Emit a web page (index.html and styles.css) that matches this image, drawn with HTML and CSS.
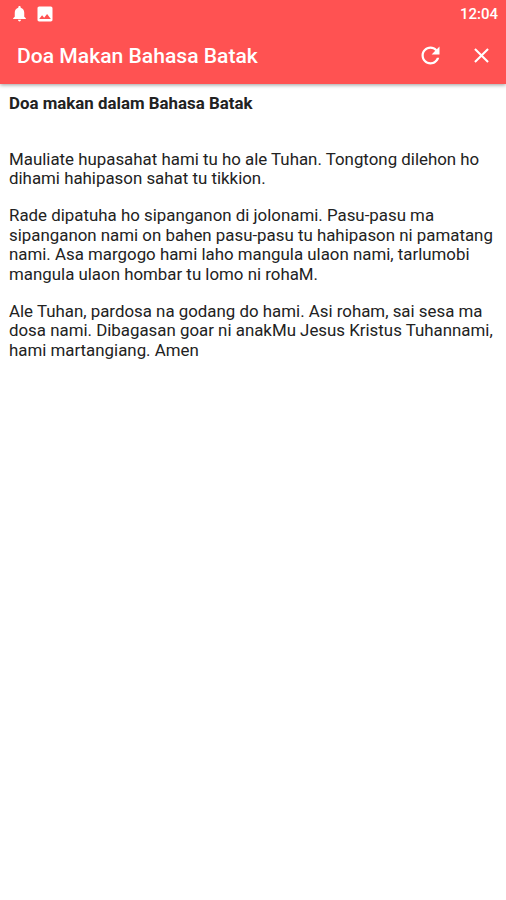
FILE: index.html
```html
<!DOCTYPE html>
<html lang="id">
<head>
  <meta charset="UTF-8">
  <meta name="viewport" content="width=device-width, initial-scale=1.0">
  <title>Doa Makan Bahasa Batak</title>
  <link rel="stylesheet" href="styles.css">
</head>
<body>
  <header>
    <div class="status-bar">
      <svg class="bell" viewBox="0 0 24 24"><path d="M12 22c1.1 0 2-.9 2-2h-4c0 1.100.9 2 2 2zm6-6v-5c0-3.070-1.640-5.640-4.500-6.320V4c0-.83-.67-1.500-1.500-1.500s-1.500.67-1.500 1.500v.68C7.630 5.360 6 7.920 6 11v5l-2 2v1h16v-1l-2-2z"/></svg>
      <svg class="image" viewBox="0 0 24 24"><path d="M21 19V5c0-1.100-.9-2-2-2H5c-1.100 0-2 .9-2 2v14c0 1.100.9 2 2 2h14c1.100 0 2-.9 2-2zM8.500 13.500l2.500 3.010L14.500 12l4.500 6H5l3.500-4.500z"/></svg>
      <span class="clock">12:04</span>
    </div>
    <div class="toolbar">
      <h1>Doa Makan Bahasa Batak</h1>
      <button class="refresh" aria-label="Refresh"><svg viewBox="0 0 24 24"><path d="M17.650 6.350C16.200 4.900 14.210 4 12 4c-4.420 0-7.990 3.580-7.990 8s3.570 8 7.990 8c3.730 0 6.840-2.550 7.730-6h-2.080c-.82 2.330-3.040 4-5.650 4-3.310 0-6-2.690-6-6s2.690-6 6-6c1.660 0 3.140.69 4.220 1.780L13 11h7V4l-2.350 2.350z"/></svg></button>
      <button class="close" aria-label="Close"><svg viewBox="0 0 24 24"><path d="M19 6.410L17.590 5 12 10.590 6.410 5 5 6.410 10.590 12 5 17.590 6.410 19 12 13.410 17.590 19 19 17.590 13.410 12z"/></svg></button>
    </div>
  </header>

  <main>
    <h2>Doa makan dalam Bahasa Batak</h2>
    <p>Mauliate hupasahat hami tu ho ale Tuhan. Tongtong dilehon ho<br>dihami hahipason sahat tu tikkion.</p>
    <p>Rade dipatuha ho sipanganon di jolonami. Pasu-pasu ma<br>sipanganon nami on bahen pasu-pasu tu hahipason ni pamatang<br>nami. Asa margogo hami laho mangula ulaon nami, tarlumobi<br>mangula ulaon hombar tu lomo ni rohaM.</p>
    <p>Ale Tuhan, pardosa na godang do hami. Asi roham, sai sesa ma<br>dosa nami. Dibagasan goar ni anakMu Jesus Kristus Tuhannami,<br>hami martangiang. Amen</p>
  </main>
</body>
</html>
```
FILE: styles.css
```css
body {
  font-family: Roboto, sans-serif;
  margin: 0;
  background: #fff;
  color: #222;
}
header {
  height: 84px;
  background: #ff5252;
  color: white;
  box-shadow: 0 1px 4px rgba(0,0,0,0.4);
}
svg {
  display: block;
  fill: currentColor;
}
.status-bar {
  display: flex;
  align-items: center;
  height: 27px;
  padding: 0 8px 0 10px;
}
.bell {
  width: 19px;
  height: 19px;
}
.image {
  width: 20px;
  height: 20px;
  margin-left: 6px;
}
.clock {
  margin-left: auto;
  font-size: 15px;
  font-weight: 500;
}
.toolbar {
  display: flex;
  align-items: center;
  height: 56px;
  padding: 0 12px 0 17px;
}
h1 {
  margin: 0 auto 0 0;
  font-size: 21.1px;
  font-weight: 500;
}
button {
  padding: 0;
  border: none;
  background: none;
  color: inherit;
}
.refresh svg {
  width: 27px;
  height: 27px;
}
.close svg {
  width: 25px;
  height: 25px;
}
.close {
  margin-left: 25px;
}
main {
  padding: 10px 9px;
}
h2 {
  margin: 0 0 36px;
  font-size: 16.87px;
  font-weight: 700;
  line-height: 19.5px;
}
p {
  margin: 0 0 17px;
  font-size: 16.88px;
  line-height: 19.7px;
  white-space: nowrap;
}
```
